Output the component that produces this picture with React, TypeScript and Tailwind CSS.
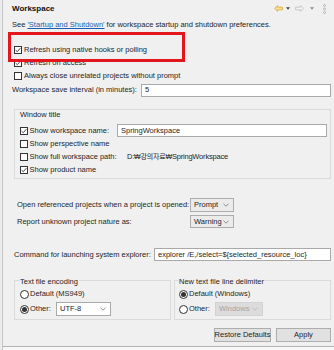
import React from "react";

function Check({ checked }: { checked?: boolean }) {
  return (
    <span className="flex h-[8px] w-[8px] shrink-0 items-center justify-center border border-[#333333] bg-white">
      {checked && (
        <svg width="6" height="6" viewBox="0 0 6 6">
          <path d="M0.6 3.1 L2.3 4.7 L5.4 1.1" fill="none" stroke="#333333" strokeWidth="0.9" />
        </svg>
      )}
    </span>
  );
}

function Radio({ checked }: { checked?: boolean }) {
  return (
    <span className="flex h-[9px] w-[9px] shrink-0 items-center justify-center rounded-full border border-[#333333] bg-white">
      {checked && <span className="h-[5px] w-[5px] rounded-full bg-[#333333]" />}
    </span>
  );
}

function Chevron({ color = "#777777" }: { color?: string }) {
  return (
    <svg width="6" height="4" viewBox="0 0 6 4">
      <path d="M0.5 0.8 L3 3.2 L5.5 0.8" fill="none" stroke={color} strokeWidth="0.8" />
    </svg>
  );
}

function Select({ text, w, h, disabled }: { text: string; w: string; h: string; disabled?: boolean }) {
  return (
    <div
      className={
        disabled
          ? `flex ${w} ${h} items-center justify-between border border-[#d2d2d2] bg-[#dcdcdc] pl-[3px] pr-[4px] text-[#a3a3a3]`
          : `flex ${w} ${h} items-center justify-between border border-[#adadad] bg-[#ebebeb] pl-[3px] pr-[4px]`
      }
    >
      <span>{text}</span>
      <Chevron color={disabled ? "#b5b5b5" : "#777777"} />
    </div>
  );
}

export default function App() {
  return (
    <div className="flex h-[350px] w-[334px] overflow-hidden whitespace-nowrap bg-[#f0f0f0] font-['Liberation_Sans','Noto_Sans_CJK_KR',sans-serif] text-[7.5px] leading-none text-[#1e1e1e]">
      <div className="w-[3px] shrink-0 border-r border-[#c6c6c6] bg-[#ececec]" />
      <div className="relative flex min-w-0 flex-1 flex-col pl-[9px] pr-[3px]">
        {/* header */}
        <div className="flex h-[17px] shrink-0 items-center justify-between">
          <span className="text-[8px] font-bold text-[#111111]">Workspace</span>
          <div className="mr-[5px] flex items-center">
            <svg width="9" height="7" viewBox="0 0 9 7">
              <path d="M0.6 3.5 L3.6 0.6 L3.6 2.2 L8.4 2.2 L8.4 4.8 L3.6 4.8 L3.6 6.4 Z" fill="#fbe39a" stroke="#d9a62c" strokeWidth="0.8" strokeLinejoin="round" />
            </svg>
            <svg className="ml-[3px]" width="4" height="3" viewBox="0 0 4 3">
              <path d="M0 0.3 L4 0.3 L2 2.8 Z" fill="#444444" />
            </svg>
            <svg className="ml-[5px]" width="9" height="7" viewBox="0 0 9 7">
              <path d="M8.4 3.5 L5.4 0.6 L5.4 2.2 L0.6 2.2 L0.6 4.8 L5.4 4.8 L5.4 6.4 Z" fill="#f4f4f4" stroke="#bcbcbc" strokeWidth="0.8" strokeLinejoin="round" />
            </svg>
            <svg className="ml-[6px]" width="4" height="3" viewBox="0 0 4 3">
              <path d="M0 0.3 L4 0.3 L2 2.8 Z" fill="#8a8a8a" />
            </svg>
            <svg className="ml-[9px]" width="3" height="10" viewBox="0 0 3 10">
              <circle cx="1.5" cy="1.5" r="1" fill="none" stroke="#9a9a9a" strokeWidth="0.6" />
              <circle cx="1.5" cy="5" r="1" fill="none" stroke="#9a9a9a" strokeWidth="0.6" />
              <circle cx="1.5" cy="8.5" r="1" fill="none" stroke="#9a9a9a" strokeWidth="0.6" />
            </svg>
          </div>
        </div>

        {/* see link */}
        <div className="flex h-[16px] shrink-0 items-center">
          <span>See&nbsp;</span>
          <span className="text-[#1a5fb4] underline decoration-[0.5px] underline-offset-1">'Startup and Shutdown'</span>
          <span>&nbsp;for workspace startup and shutdown preferences.</span>
        </div>

        {/* checkboxes */}
        <div className="mt-[10px] flex flex-col pl-[2px]">
          <div className="flex h-[13px] items-center gap-[2px]">
            <Check checked />
            <span>Refresh using native hooks or polling</span>
          </div>
          <div className="flex h-[13px] items-center gap-[2px]">
            <Check checked />
            <span>Refresh on access</span>
          </div>
          <div className="flex h-[13px] items-center gap-[2px]">
            <Check />
            <span>Always close unrelated projects without prompt</span>
          </div>
        </div>

        {/* save interval */}
        <div className="mt-[1px] flex h-[14px] shrink-0 items-center">
          <span className="w-[129px] shrink-0">Workspace save interval (in minutes):</span>
          <div className="flex h-[13px] flex-1 items-center border border-[#a9a9a9] bg-white pl-[3px]">5</div>
        </div>

        {/* window title group */}
        <div className="mt-[12px] ml-[2px] flex shrink-0 flex-col border border-[#dadada] pb-[2px] pl-[5px] pr-[3px]">
          <div className="flex h-[10px] items-center">Window title</div>
          <div className="mt-[4px] flex h-[13px] items-center">
            <div className="flex w-[97px] shrink-0 items-center gap-[1.5px]">
              <Check checked />
              <span>Show workspace name:</span>
            </div>
            <div className="flex h-[13px] flex-1 items-center border border-[#a9a9a9] bg-white pl-[3px]">SpringWorkspace</div>
          </div>
          <div className="flex h-[13px] items-center gap-[1.5px]">
            <Check />
            <span>Show perspective name</span>
          </div>
          <div className="flex h-[13px] items-center">
            <div className="flex w-[107px] shrink-0 items-center gap-[1.5px]">
              <Check />
              <span>Show full workspace path:</span>
            </div>
            <span className="tracking-[-0.2px]">
              D:<span className="text-[7px]">₩강의자료₩</span>SpringWorkspace
            </span>
          </div>
          <div className="flex h-[13px] items-center gap-[1.5px]">
            <Check checked />
            <span>Show product name</span>
          </div>
        </div>

        {/* open referenced */}
        <div className="mt-[19px] ml-[5px] flex h-[14px] shrink-0 items-center">
          <span className="w-[173px] shrink-0">Open referenced projects when a project is opened:</span>
          <Select text="Prompt" w="w-[44px]" h="h-[14px]" />
        </div>
        <div className="mt-[3px] ml-[5px] flex h-[13px] shrink-0 items-center">
          <span className="w-[173px] shrink-0">Report unknown project nature as:</span>
          <Select text="Warning" w="w-[44px]" h="h-[13px]" />
        </div>

        {/* command */}
        <div className="mt-[20px] ml-[2px] flex h-[13px] shrink-0 items-center">
          <span className="w-[140px] shrink-0">Command for launching system explorer:</span>
          <div className="flex h-[13px] flex-1 items-center overflow-hidden border border-[#a9a9a9] bg-white pl-[3px]">
            explorer /E,/select=${"{"}selected_resource_loc{"}"}
          </div>
        </div>

        {/* encoding groups */}
        <div className="mt-[19px] ml-[2px] flex shrink-0 gap-[3px]">
          <div className="flex w-[157px] flex-col border border-[#dadada] pb-[3px] pl-[5px]">
            <span className="-mt-[4px] h-[9px] w-fit bg-[#f0f0f0] pr-[1px] leading-[9px]">Text file encoding</span>
            <div className="mt-[2px] flex h-[12px] items-center gap-[1px]">
              <Radio />
              <span>Default (MS949)</span>
            </div>
            <div className="mt-[2px] flex h-[14px] items-center">
              <div className="flex w-[36px] shrink-0 items-center gap-[1px]">
                <Radio checked />
                <span>Other:</span>
              </div>
              <div className="flex h-[14px] w-[55px] items-center justify-between border border-[#a9a9a9] bg-white pl-[3px] pr-[4px]">
                <span>UTF-8</span>
                <Chevron />
              </div>
            </div>
          </div>
          <div className="flex flex-1 flex-col border border-[#dadada] pb-[3px] pl-[4px]">
            <span className="-mt-[4px] h-[9px] w-fit bg-[#f0f0f0] pr-[1px] leading-[9px]">New text file line delimiter</span>
            <div className="mt-[2px] flex h-[12px] items-center gap-[1px]">
              <Radio checked />
              <span>Default (Windows)</span>
            </div>
            <div className="mt-[2px] flex h-[14px] items-center">
              <div className="flex w-[36px] shrink-0 items-center gap-[1px]">
                <Radio />
                <span>Other:</span>
              </div>
              <Select text="Windows" w="w-[48px]" h="h-[14px]" disabled />
            </div>
          </div>
        </div>

        {/* buttons */}
        <div className="mt-[8px] flex h-[14px] shrink-0 justify-end gap-[5px]">
          <div className="flex w-[57px] items-center justify-center border border-[#adadad] bg-[#e1e1e1]">Restore Defaults</div>
          <div className="flex w-[55px] items-center justify-center border border-[#adadad] bg-[#e1e1e1]">Apply</div>
        </div>

        <div className="-ml-[9px] -mr-[3px] mt-[4px] flex-1 border-t border-[#b4b4b4] bg-[#f7f7f7]" />

        {/* annotation box */}
        <div className="pointer-events-none absolute left-[5px] top-[32px] h-[30px] w-[177px] border-[3px] border-[#e3161e]" />
      </div>
    </div>
  );
}
